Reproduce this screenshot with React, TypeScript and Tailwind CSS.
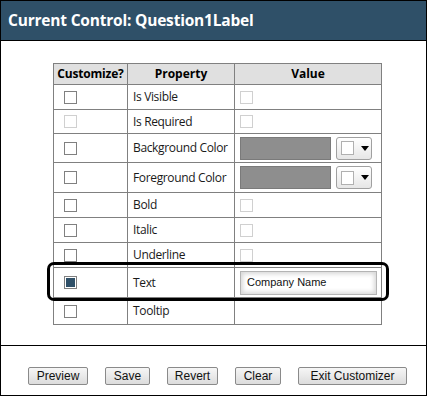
import React from "react";

const Box = ({ variant }: { variant: "normal" | "disabled" | "checked" }) => (
  <div
    className={
      "w-[13px] h-[13px] border bg-white flex items-center justify-center " +
      (variant === "disabled" ? "border-[#d0d0d0]" : "border-[#808080]")
    }
  >
    {variant === "checked" && <div className="w-[9px] h-[9px] bg-[#2f5068]" />}
  </div>
);

const ColorPicker = () => (
  <div className="flex items-center">
    <div className="w-[91px] h-[23px] bg-[#8e8e8e] border border-[#7a7a7a]" />
    <div className="ml-[5px] w-[36px] h-[23px] rounded-[3px] border border-[#a0a0a0] bg-gradient-to-b from-white to-[#e6e6e6] flex items-center pl-[4px]">
      <div className="w-[13px] h-[14px] bg-white border border-[#b0b0b0]" />
      <svg width="8" height="5" viewBox="0 0 8 5" className="ml-[7px]">
        <path d="M0 0H8L4 5Z" fill="#000" />
      </svg>
    </div>
  </div>
);

type Row = {
  label: string;
  h: string;
  c: "normal" | "disabled" | "checked";
  value: "box" | "color" | "text" | "none";
};

const rows: Row[] = [
  { label: "Is Visible", h: "h-[25px]", c: "normal", value: "box" },
  { label: "Is Required", h: "h-[24px]", c: "disabled", value: "box" },
  { label: "Background Color", h: "h-[29px]", c: "normal", value: "color" },
  { label: "Foreground Color", h: "h-[30px]", c: "normal", value: "color" },
  { label: "Bold", h: "h-[25px]", c: "normal", value: "box" },
  { label: "Italic", h: "h-[25px]", c: "normal", value: "box" },
  { label: "Underline", h: "h-[25px]", c: "normal", value: "box" },
  { label: "Text", h: "h-[30px]", c: "checked", value: "text" },
  { label: "Tooltip", h: "h-[27px]", c: "normal", value: "none" },
];

const Btn = ({ label, w }: { label: string; w: string }) => (
  <button
    className={
      w +
      " h-[18px] rounded-[2px] border border-[#8a8a8a] bg-gradient-to-b from-[#f6f6f6] to-[#dcdcdc] text-[12px] leading-[16px] text-[#111] text-center"
    }
    style={{ fontFamily: '"Liberation Sans", Arial, sans-serif' }}
  >
    {label}
  </button>
);

export default function App() {
  return (
    <div
      className="relative w-[427px] h-[396px] border border-black bg-white flex flex-col"
      style={{ fontFamily: '"Open Sans", "Noto Sans", sans-serif' }}
    >
      <div className="h-[40px] bg-[#2f5068] border-b border-black flex items-center pl-[7px]">
        <span className="text-white font-bold text-[15.5px] tracking-[-0.2px]">
          Current Control: Question1Label
        </span>
      </div>
      <div className="h-[304px] pt-[22px] pl-[52px]">
        <table className="border-collapse text-[12px] text-[#1a1a1a] table-fixed">
          <thead>
            <tr className="h-[21px] bg-[#e0e0e0]">
              <th className="w-[74px] border border-[#808080] font-bold text-black p-0 tracking-[-0.2px]">Customize?</th>
              <th className="w-[107px] border border-[#808080] font-bold text-black p-0">Property</th>
              <th className="w-[147px] border border-[#808080] font-bold text-black p-0">Value</th>
            </tr>
          </thead>
          <tbody>
            {rows.map((r) => (
              <tr key={r.label} className={r.h}>
                <td className="border border-[#808080] p-0 pl-[10px] align-middle">
                  <Box variant={r.c} />
                </td>
                <td className="border border-[#808080] p-0 pl-[5px] align-middle whitespace-nowrap tracking-[-0.35px]">
                  {r.label}
                </td>
                <td className="border border-[#808080] p-0 pl-[5px] align-middle">
                  {r.value === "box" && <Box variant="disabled" />}
                  {r.value === "color" && <ColorPicker />}
                  {r.value === "text" && (
                    <div
                      className="w-[137px] h-[24px] border border-[#b4b4b4] bg-white shadow-[inset_0_0_4px_2px_#d8d8d8] flex items-center pl-[6px] text-[11px] text-[#111]"
                      style={{ fontFamily: '"Liberation Sans", Arial, sans-serif' }}
                    >
                      Company Name
                    </div>
                  )}
                </td>
              </tr>
            ))}
          </tbody>
        </table>
      </div>
      <div className="flex-1 border-t border-black flex items-start pt-[21px] pl-[27px] gap-[17px]">
        <Btn label="Preview" w="w-[60px]" />
        <Btn label="Save" w="w-[45px]" />
        <Btn label="Revert" w="w-[51px]" />
        <Btn label="Clear" w="w-[46px]" />
        <Btn label="Exit Customizer" w="w-[109px]" />
      </div>
      <div className="absolute left-[46px] top-[261px] w-[342px] h-[39px] border-[3px] border-black rounded-[7px] pointer-events-none" />
    </div>
  );
}
